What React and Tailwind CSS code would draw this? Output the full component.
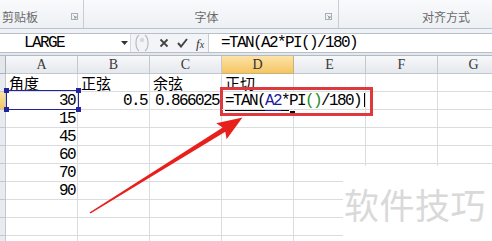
import React from "react";

const CJK = { fontFamily: '"Noto Sans CJK SC", "Noto Sans", sans-serif' };
const MONO = { fontFamily: '"Liberation Mono", "DejaVu Sans Mono", monospace' };

function Launcher() {
  return (
    <svg width="7" height="7" viewBox="0 0 7 7" className="shrink-0">
      <rect x="0.5" y="0.5" width="6" height="6" fill="none" stroke="#a9aeb5" />
      <path d="M2.5 2.5 L5 5 M5 3 L5 5 L3 5" stroke="#8a9099" fill="none" strokeWidth="0.9" />
    </svg>
  );
}

function Cell({ children, className = "", style }) {
  return (
    <div
      className={`h-[18px] border-r border-b border-[#dadcdf] flex items-center ${className}`}
      style={style}
    >
      {children}
    </div>
  );
}

function Num({ v }) {
  return (
    <Cell className="justify-end pr-[2px] text-[16px] tracking-[-1.6px] text-black leading-none">
      <span style={MONO}>{v}</span>
    </Cell>
  );
}

function Zh({ v }) {
  return (
    <Cell className="pl-[3px] text-[15px] text-black leading-none">
      <span style={CJK}>{v}</span>
    </Cell>
  );
}

export default function App() {
  const colLetters = ["A", "B", "C", "D", "E", "F", "G"];
  const aValues = ["15", "45", "60", "70", "90"];

  const rows = [];
  rows.push(
    <React.Fragment key="r1">
      <div className="h-[18px] border-b border-r border-[#c3c8cf] bg-[#e8ebef]" />
      <Zh v="角度" />
      <Zh v="正弦" />
      <Zh v="余弦" />
      <Zh v="正切" />
      <Cell />
      <Cell />
      <Cell />
    </React.Fragment>
  );
  rows.push(
    <React.Fragment key="r2">
      <div className="h-[18px] border-b border-r border-[#c3c8cf] bg-gradient-to-b from-[#fbe2a4] to-[#f2c564]" />
      <Num v="30" />
      <Num v="0.5" />
      <Num v="0.866025" />
      <Cell className="pl-[3px] overflow-visible whitespace-nowrap border-r-transparent relative z-10 text-[16px] tracking-[-1.6px] leading-none">
        <span style={MONO} className="text-black relative">
          <span className="border-b border-black">=TAN(</span>
          <span className="border-b border-[#1c1ca0] text-[#1c1ca0]">A2</span>
          <span className="border-b border-black">*</span>
          <span className="relative">
            P
            <span className="absolute left-[1px] bottom-[-3px] w-[5px] h-[2px] bg-black" />
          </span>
          I<span className="text-[#1c8a1c]">()</span>/180)
          <span className="inline-block align-middle ml-[3px] w-[1px] h-[14px] bg-black" />
        </span>
      </Cell>
      <Cell />
      <Cell />
      <Cell />
    </React.Fragment>
  );
  aValues.forEach((v, i) => {
    rows.push(
      <React.Fragment key={"a" + i}>
        <div className="h-[18px] border-b border-r border-[#c3c8cf] bg-[#e8ebef]" />
        <Num v={v} />
        <Cell />
        <Cell />
        <Cell />
        <Cell />
        <Cell />
        <Cell />
      </React.Fragment>
    );
  });
  for (let i = 0; i < 4; i++) {
    rows.push(
      <React.Fragment key={"e" + i}>
        <div className="h-[18px] border-b border-r border-[#c3c8cf] bg-[#e8ebef]" />
        <Cell />
        <Cell />
        <Cell />
        <Cell />
        <Cell />
        <Cell />
        <Cell />
      </React.Fragment>
    );
  }

  return (
    <div className="relative w-[492px] h-[241px] overflow-hidden bg-white">
      {/* Ribbon group labels */}
      <div
        className="h-[29px] flex bg-gradient-to-b from-[#f9fafc] to-[#edf0f4] border-b border-[#bcc3cc] text-[12px] text-[#6a6a6a]"
        style={CJK}
      >
        <div className="w-[84px] flex items-center pt-[5px] pl-[2px] border-r border-[#c8cdd4]">
          <span className="flex-1">剪贴板</span>
          <span className="mr-[5px] mt-[-1px]"><Launcher /></span>
        </div>
        <div className="w-[255px] flex items-center pt-[5px] border-r border-[#c8cdd4]">
          <span className="flex-1 text-center pl-[4px]">字体</span>
          <span className="mr-[6px] mt-[-1px]"><Launcher /></span>
        </div>
        <div className="flex-1 flex items-center pt-[5px] pl-[83px]">
          <span>对齐方式</span>
        </div>
      </div>

      <div className="h-[4px] bg-[#eef1f5]" />

      {/* Formula bar */}
      <div className="h-[20px] flex border-y border-[#b8bfc8] bg-white">
        <div className="w-[130px] flex items-center relative">
          <span style={MONO} className="pl-[24px] text-[16px] tracking-[-1.6px] leading-none text-black">
            LARGE
          </span>
          <svg className="absolute left-[121px] top-[7px]" width="7" height="4" viewBox="0 0 7 4">
            <path d="M0 0 L7 0 L3.5 4 Z" fill="#333" />
          </svg>
        </div>
        <div className="w-[78px] flex items-center bg-[#f2f4f7] border-l border-[#d5d9df]">
          <svg width="16" height="18" viewBox="0 0 16 18" className="ml-[3px]">
            <path d="M5 1 C1 4 1 14 5 17" stroke="#b6bcc4" fill="none" strokeWidth="1.2" />
            <path d="M11 1 C15 4 15 14 11 17" stroke="#b6bcc4" fill="none" strokeWidth="1.2" />
            <circle cx="8" cy="6" r="2.2" fill="#d5d9de" />
          </svg>
          <svg width="10" height="10" viewBox="0 0 10 10" className="ml-[9px]">
            <path d="M1.5 1.5 L8.5 8.5 M8.5 1.5 L1.5 8.5" stroke="#444" strokeWidth="1.8" />
          </svg>
          <svg width="11" height="10" viewBox="0 0 11 10" className="ml-[8px]">
            <path d="M1 5 L4 8.5 L10 1" stroke="#444" strokeWidth="2" fill="none" />
          </svg>
          <span
            className="ml-[8px] text-[13px] italic text-[#333] leading-none"
            style={{ fontFamily: '"Liberation Serif", serif' }}
          >
            f<span className="text-[10px]">x</span>
          </span>
        </div>
        <div className="flex-1 flex items-center border-l border-[#c6ccd3] pl-[12px]">
          <span style={MONO} className="text-[16px] tracking-[-1.6px] leading-none text-black">
            =TAN(A2*PI()/180)
          </span>
        </div>
      </div>

      <div className="h-[2px] bg-[#e4e8ed]" />

      {/* Sheet grid */}
      <div className="grid grid-cols-[6px_repeat(7,72px)] border-t border-[#b3bac3]">
        <div className="h-[18px] border-b border-r border-[#a9b0b9] bg-[#e3e7ec]" />
        {colLetters.map((c) => (
          <div
            key={c}
            className={`h-[18px] border-b border-r flex items-center justify-center text-[14px] leading-none ${
              c === "D"
                ? "bg-gradient-to-b from-[#fce3a6] to-[#f4c561] border-[#c9b27a] text-[#333]"
                : "bg-gradient-to-b from-[#f7f8fa] to-[#e5e8ed] border-[#c3c8cf] text-[#3a3a3a]"
            }`}
            style={{ fontFamily: '"Liberation Serif", serif' }}
          >
            {c}
          </div>
        ))}
        {rows}
      </div>

      {/* Active cell selection */}
      <div className="absolute left-[6px] top-[90px] w-[73px] h-[20px] border border-[#23239b] pointer-events-none">
        <div className="absolute left-[-3px] top-[-3px] w-[5px] h-[5px] bg-[#23239b]" />
        <div className="absolute right-[-3px] top-[-3px] w-[5px] h-[5px] bg-[#23239b]" />
        <div className="absolute left-[-3px] bottom-[-3px] w-[5px] h-[5px] bg-[#23239b]" />
        <div className="absolute right-[-3px] bottom-[-3px] w-[5px] h-[5px] bg-[#23239b]" />
      </div>

      {/* Red highlight box */}
      <div className="absolute left-[220px] top-[87px] w-[153px] h-[29px] border-[3px] border-[#de3a3e] pointer-events-none" />

      {/* Watermark area */}
      <div className="absolute left-[343px] top-[166px] w-[149px] h-[75px] bg-white flex items-start pt-[20px] pl-[1px]">
        <span className="text-[35px] leading-none text-[#d9d9d9] whitespace-nowrap tracking-[0.5px]" style={CJK}>
          软件技巧
        </span>
      </div>

      {/* Red arrow */}
      <svg className="absolute left-0 top-0 pointer-events-none" width="492" height="241" viewBox="0 0 492 241">
        <polygon
          points="89.5,212.5 222.7,127.5 216.2,123.2 242.5,117.5 226.6,139.3 225.3,131.7 90.5,213.6"
          fill="#e8201c"
        />
      </svg>
    </div>
  );
}
